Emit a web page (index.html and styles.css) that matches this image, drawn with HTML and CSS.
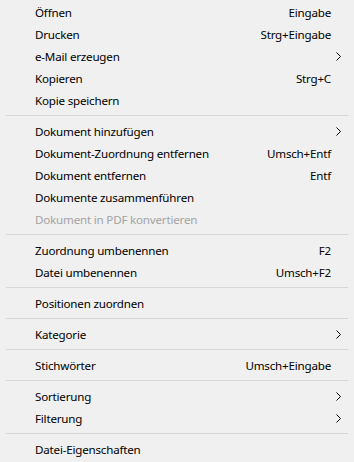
FILE: index.html
```html
<!DOCTYPE html>
<html>
<head>
  <title>Kontextmenü</title>
  <link rel="stylesheet" href="styles.css">
</head>
<body>
  <div class="menu">
    <div class="item"><span class="label">Öffnen</span><span class="key">Eingabe</span><span class="sub"></span></div>
    <div class="item"><span class="label">Drucken</span><span class="key">Strg+Eingabe</span><span class="sub"></span></div>
    <div class="item"><span class="label">e-Mail erzeugen</span><span class="key"></span><span class="sub"><svg width="5" height="9" viewBox="0 0 5 9"><path d="M0.5 0.5 L4.5 4.5 L0.5 8.5" fill="none" stroke="#000" stroke-width="1"/></svg></span></div>
    <div class="item"><span class="label">Kopieren</span><span class="key">Strg+C</span><span class="sub"></span></div>
    <div class="item"><span class="label">Kopie speichern</span><span class="key"></span><span class="sub"></span></div>
    <div class="sep"></div>
    <div class="item"><span class="label">Dokument hinzufügen</span><span class="key"></span><span class="sub"><svg width="5" height="9" viewBox="0 0 5 9"><path d="M0.5 0.5 L4.5 4.5 L0.5 8.5" fill="none" stroke="#000" stroke-width="1"/></svg></span></div>
    <div class="item"><span class="label">Dokument-Zuordnung entfernen</span><span class="key">Umsch+Entf</span><span class="sub"></span></div>
    <div class="item"><span class="label">Dokument entfernen</span><span class="key">Entf</span><span class="sub"></span></div>
    <div class="item"><span class="label">Dokumente zusammenführen</span><span class="key"></span><span class="sub"></span></div>
    <div class="item disabled"><span class="label">Dokument in PDF konvertieren</span><span class="key"></span><span class="sub"></span></div>
    <div class="sep"></div>
    <div class="item"><span class="label">Zuordnung umbenennen</span><span class="key">F2</span><span class="sub"></span></div>
    <div class="item"><span class="label">Datei umbenennen</span><span class="key">Umsch+F2</span><span class="sub"></span></div>
    <div class="sep"></div>
    <div class="item"><span class="label">Positionen zuordnen</span><span class="key"></span><span class="sub"></span></div>
    <div class="sep"></div>
    <div class="item"><span class="label">Kategorie</span><span class="key"></span><span class="sub"><svg width="5" height="9" viewBox="0 0 5 9"><path d="M0.5 0.5 L4.5 4.5 L0.5 8.5" fill="none" stroke="#000" stroke-width="1"/></svg></span></div>
    <div class="sep"></div>
    <div class="item"><span class="label">Stichwörter</span><span class="key">Umsch+Eingabe</span><span class="sub"></span></div>
    <div class="sep"></div>
    <div class="item"><span class="label">Sortierung</span><span class="key"></span><span class="sub"><svg width="5" height="9" viewBox="0 0 5 9"><path d="M0.5 0.5 L4.5 4.5 L0.5 8.5" fill="none" stroke="#000" stroke-width="1"/></svg></span></div>
    <div class="item"><span class="label">Filterung</span><span class="key"></span><span class="sub"><svg width="5" height="9" viewBox="0 0 5 9"><path d="M0.5 0.5 L4.5 4.5 L0.5 8.5" fill="none" stroke="#000" stroke-width="1"/></svg></span></div>
    <div class="sep"></div>
    <div class="item"><span class="label">Datei-Eigenschaften</span><span class="key"></span><span class="sub"></span></div>
  </div>
</body>
</html>
```

FILE: styles.css
```css
/* Kontextmenü im Windows-Stil */
body {
  margin: 0;
  padding: 0;
  background-color: #f0f0f0;
  font-family: "Noto Sans", "Open Sans", sans-serif;
  font-size: 11.6px;
  letter-spacing: -0.2px;
  color: #000;
}
.menu {
  padding-top: 1px;
  width: 354px;
}
.item {
  display: flex;
  align-items: center;
  height: 22px;
  padding-left: 35px;
  white-space: nowrap;
}
.label {
  flex: 1;
}
.key {
  text-align: right;
}
.sub {
  width: 23px;
  display: flex;
  align-items: center;
  padding-left: 5px;
  box-sizing: border-box;
}
.sub svg {
  display: block;
}
.disabled {
  color: #a3a3a3;
}
.sep {
  height: 1px;
  background-color: #d7d7d7;
  margin: 4px 6px 4px 6px;
}
```
